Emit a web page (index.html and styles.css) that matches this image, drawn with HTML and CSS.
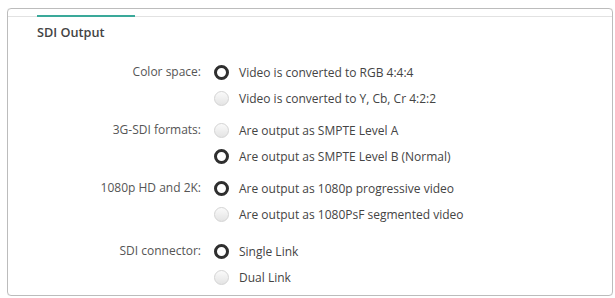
FILE: index.html
```html
<!DOCTYPE html>
<html>
<head>
<meta charset="utf-8">
<link rel="stylesheet" href="styles.css">
</head>
<body>
<div class="panel">
  <div class="tabs"><div class="tab-active"></div></div>
  <div class="title">SDI Output</div>
  <div class="form">
    <div class="group">
      <div class="label">Color space:</div>
      <div class="options">
        <div class="opt"><span class="radio on"></span><span>Video is converted to RGB 4:4:4</span></div>
        <div class="opt"><span class="radio"></span><span>Video is converted to Y, Cb, Cr 4:2:2</span></div>
      </div>
    </div>
    <div class="group">
      <div class="label">3G-SDI formats:</div>
      <div class="options">
        <div class="opt"><span class="radio"></span><span>Are output as SMPTE Level A</span></div>
        <div class="opt"><span class="radio on"></span><span>Are output as SMPTE Level B (Normal)</span></div>
      </div>
    </div>
    <div class="group">
      <div class="label">1080p HD and 2K:</div>
      <div class="options">
        <div class="opt"><span class="radio on"></span><span>Are output as 1080p progressive video</span></div>
        <div class="opt"><span class="radio"></span><span>Are output as 1080PsF segmented video</span></div>
      </div>
    </div>
    <div class="group last">
      <div class="label">SDI connector:</div>
      <div class="options">
        <div class="opt"><span class="radio on"></span><span>Single Link</span></div>
        <div class="opt"><span class="radio"></span><span>Dual Link</span></div>
      </div>
    </div>
  </div>
</div>
</body>
</html>
```
FILE: styles.css
```css
html, body { background: #fff; }
body {
  margin: 8px 2px 3px 7px;
  font-family: "Open Sans", "DejaVu Sans", sans-serif;
  color: #444;
}
.panel {
  border: 1.5px solid #bcbcbc;
  border-radius: 4px;
  box-shadow: 0 0 1px #ddd;
  box-sizing: border-box;
  height: 288px;
}
.tabs {
  height: 7px;
  border-bottom: 1px solid #e2e2e2;
  display: flex;
  align-items: flex-end;
}
.tab-active {
  margin-left: 29px;
  width: 98px;
  height: 2px;
  margin-bottom: -1px;
  background: #3aa99a;
}
.title {
  margin: 7px 0 0 29px;
  font-size: 12.7px;
  font-weight: 600;
  color: #444;
  line-height: 16px;
}
.form {
  margin-top: 19px;
  display: flex;
  flex-direction: column;
  gap: 6px;
}
.group {
  display: grid;
  grid-template-columns: 193px 1fr;
  column-gap: 13px;
}
.group.last { margin-top: 5px; }
.label {
  text-align: right;
  font-size: 12px;
  line-height: 26px;
  color: #555;
}
.options { display: flex; flex-direction: column; }
.opt {
  display: flex;
  align-items: center;
  height: 26px;
  gap: 10px;
  font-size: 12px;
  color: #444;
}
.radio {
  width: 15px;
  height: 15px;
  box-sizing: border-box;
  border-radius: 50%;
  border: 1px solid #d4d4d4;
  background: linear-gradient(#fafafa, #e4e4e4);
  flex: none;
}
.radio.on {
  border: 3.5px solid #2f2f2f;
  background: #fff;
}
```
